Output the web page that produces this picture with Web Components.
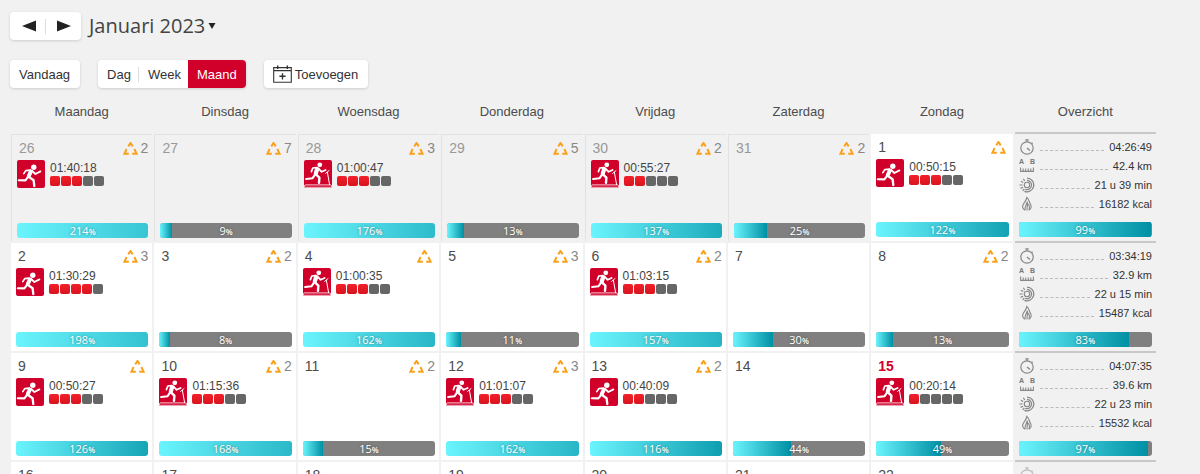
<!DOCTYPE html>
<html lang="nl">
<head>
<meta charset="utf-8">
<title>Kalender</title>
<style>
    body {
        margin: 0;
        height: 100vh;
        overflow: hidden;
        background: #f1f1f1;
        color: #4c4c4c;
        font-family: "Liberation Sans", Arial, sans-serif;
        font-size: 13px;
    }
</style>
</head>
<body>
<training-calendar></training-calendar>

<script>
/**
 * Creates a template element out of a string of markup.
 *
 * @param {String} html the markup
 * @returns {HTMLTemplateElement}
 */
function createTemplate(html) {
    const template = document.createElement("template");
    template.innerHTML = html;
    return template;
}

const ICONS = {
    run: `
        <svg viewBox="0 0 28 28" width="28" height="28">
            <rect width="28" height="28" rx="2" fill="#d0002b"/>
            <circle cx="16.8" cy="7.3" r="2.7" fill="#fff"/>
            <g fill="none" stroke="#fff" stroke-linecap="round" stroke-linejoin="round">
                <path d="M13.8 11.6L11.8 16" stroke-width="4"/>
                <path d="M13.5 10.2L8.8 10.6L6.8 13.6" stroke-width="1.7"/>
                <path d="M15.2 11L18.4 14L23.4 11.4" stroke-width="1.8"/>
                <path d="M11 17L8.4 20.4L1.8 20.2" stroke-width="2.1"/>
                <path d="M12.4 17.2L16.6 20.2L17.3 26" stroke-width="2.3"/>
            </g>
        </svg>`,
    treadmill: `
        <svg viewBox="0 0 28 28" width="28" height="28">
            <rect width="28" height="28" rx="2" fill="#d0002b"/>
            <circle cx="15.8" cy="4.8" r="2.4" fill="#fff"/>
            <g fill="none" stroke="#fff" stroke-linecap="round" stroke-linejoin="round">
                <path d="M13.2 9L11.8 13.4" stroke-width="4.2"/>
                <path d="M12.6 7.6L8.8 8L7.4 11.6" stroke-width="1.7"/>
                <path d="M14.6 8.6L17.6 11.8L21.6 10" stroke-width="1.8"/>
                <path d="M11 14.6L8.6 18.2L2.2 19" stroke-width="2.1"/>
                <path d="M12.2 14.6L15.4 17.6L15 22.8" stroke-width="2.4"/>
                <path d="M21.6 13.4L25 10.6M23.4 12.4L25.6 24.6" stroke-width="1"/>
            </g>
            <rect x=".5" y="24.9" width="27" height="2.4" rx="1" fill="#d0002b" stroke="#fff" stroke-width=".8"/>
        </svg>`,
    time: `
        <svg viewBox="0 0 16 16" width="16" height="16" fill="none" stroke="#888">
            <circle cx="8" cy="9" r="6.2" stroke-width="1.2"/>
            <path d="M8 2.8V1M6.3 .9H9.7M12.6 3.6L13.6 4.6M8 9L11 11.6" stroke-width="1.3"/>
        </svg>`,
    distance: `
        <svg viewBox="0 0 16 16" width="16" height="16" fill="none" stroke="#888">
            <g fill="#777" stroke="none" font-size="7" font-weight="bold">
                <text x="0" y="6">A</text>
                <text x="11" y="6">B</text>
            </g>
            <path d="M1.6 9.5V13.4H14.4V9.5M4.2 10.6V13M6.7 10.6V13M9.3 10.6V13M11.8 10.6V13" stroke-width="1.1"/>
        </svg>`,
    duration: `
        <svg viewBox="0 0 16 16" width="16" height="16" fill="none" stroke="#888">
            <path d="M8 1.2A6.8 6.8 0 1 1 5.4 14.3" stroke-width="1.3"/>
            <path d="M8 3.3A4.7 4.7 0 1 1 6.2 12.4" stroke-width="1.2"/>
            <circle cx="8" cy="8" r="2.7" stroke-width="1.1"/>
            <path d="M4.4 1.8L5.7 4M1.9 4.2L4.2 5.5M.4 8H3.6M1.6 11.4L4 10.2M3.8 14L5.2 11.9" stroke-width="1.2"/>
        </svg>`,
    energy: `
        <svg viewBox="0 0 16 16" width="16" height="16" fill="none" stroke="#888" stroke-width="1.1">
            <path d="M6.2 14.2C3.4 13 3 10.4 4.4 8C5.6 6 7.6 4.6 7.8 1.4C10 3.2 10 5.4 11 7.4C12.4 9.8 13.2 12.6 9.8 14.2"/>
            <path d="M6.2 14C5 11.4 7.6 9 8.2 5.6C9 8.6 8 10.4 8 14.4M9.8 14C11.2 12 10.2 9.6 9.4 8"/>
        </svg>`,
    add: `
        <svg viewBox="0 0 19 18" width="19" height="18" fill="none" stroke="#333">
            <path d="M.7 2.6H18.3V17.3H.7ZM.7 5.6H18.3" stroke-width="1.1"/>
            <path d="M4.7 .4V4M14.3 .4V4M9.5 8.2V14.4M6.4 11.3H12.6" stroke-width="1.4"/>
        </svg>`,
    load: `
        <svg viewBox="0 0 15 13" width="15" height="13" fill="none" stroke="#f9a11b" stroke-width="2">
            <path d="M5.3 4.4L7.5 1L9.7 4.4M3.6 7L1.4 11.8H5.8M11.4 7L13.6 11.8H9.2"/>
        </svg>`
};

const WEEKDAYS = ["Maandag", "Dinsdag", "Woensdag", "Donderdag", "Vrijdag", "Zaterdag", "Zondag", "Overzicht"];

// load: "" draws the triangle without a number
const WEEKS = [
    {
        days: [
            {day: 26, past: true, load: "2", sport: "run", time: "01:40:18", level: 3, percent: 214},
            {day: 27, past: true, load: "7", percent: 9},
            {day: 28, past: true, load: "3", sport: "treadmill", time: "01:00:47", level: 3, percent: 176},
            {day: 29, past: true, load: "5", percent: 13},
            {day: 30, past: true, load: "2", sport: "treadmill", time: "00:55:27", level: 2, percent: 137},
            {day: 31, past: true, load: "2", percent: 25},
            {day: 1, load: "", sport: "run", time: "00:50:15", level: 3, percent: 122}
        ],
        total: {time: "04:26:49", distance: "42.4 km", duration: "21 u 39 min", energy: "16182 kcal", percent: 99}
    },
    {
        days: [
            {day: 2, load: "3", sport: "run", time: "01:30:29", level: 4, percent: 198},
            {day: 3, load: "2", percent: 8},
            {day: 4, load: "", sport: "treadmill", time: "01:00:35", level: 3, percent: 162},
            {day: 5, load: "3", percent: 11},
            {day: 6, load: "2", sport: "treadmill", time: "01:03:15", level: 3, percent: 157},
            {day: 7, percent: 30},
            {day: 8, load: "2", percent: 13}
        ],
        total: {time: "03:34:19", distance: "32.9 km", duration: "22 u 15 min", energy: "15487 kcal", percent: 83}
    },
    {
        days: [
            {day: 9, load: "", sport: "run", time: "00:50:27", level: 3, percent: 126},
            {day: 10, load: "2", sport: "treadmill", time: "01:15:36", level: 3, percent: 168},
            {day: 11, load: "2", percent: 15},
            {day: 12, load: "3", sport: "treadmill", time: "01:01:07", level: 3, percent: 162},
            {day: 13, load: "2", sport: "run", time: "00:40:09", level: 2, percent: 116},
            {day: 14, percent: 44},
            {day: 15, today: true, sport: "treadmill", time: "00:20:14", level: 1, percent: 49}
        ],
        total: {time: "04:07:35", distance: "39.6 km", duration: "22 u 23 min", energy: "15532 kcal", percent: 97}
    },
    {
        days: [{day: 16}, {day: 17}, {day: 18}, {day: 19}, {day: 20}, {day: 21}, {day: 22}],
        total: {}
    }
];

/**
 * White raised box that holds one or more buttons.
 */
class ButtonGroup extends HTMLElement {
    constructor() {
        super();
        this.attachShadow({mode: "open"});
        this.shadowRoot.appendChild(ButtonGroup.template.content.cloneNode(true));
    }
}

ButtonGroup.template = createTemplate(`
    <style>
        :host {
            display: inline-flex;
            align-items: stretch;
            height: 28px;
            border-radius: 4px;
            background: #fff;
            box-shadow: 0 1px 3px rgba(0, 0, 0, 0.15);
            overflow: hidden;
        }

        ::slotted(button) {
            display: flex;
            align-items: center;
            gap: 3px;
            margin: 0;
            padding: 0 7px 0 9px;
            border: 0;
            background: none;
            color: #333;
            font: inherit;
            cursor: pointer;
        }

        ::slotted(button:last-child) {
            padding-right: 9px;
        }

        ::slotted(button:only-child) {
            padding-right: 10px;
        }

        ::slotted(button.active) {
            background: #d0002b;
            color: #fff;
        }

        ::slotted(hr) {
            width: 1px;
            height: 15px;
            margin: auto 0;
            border: 0;
            background: #ddd;
        }
    </style>
    <slot></slot>
`);

customElements.define("button-group", ButtonGroup);

/**
 * Progress bar. Above 100 percent the fill runs on outside the bar and is cut.
 */
class LoadBar extends HTMLElement {
    static get observedAttributes() {
        return ["percent"];
    }

    constructor() {
        super();
        this.attachShadow({mode: "open"});
        this.shadowRoot.appendChild(LoadBar.template.content.cloneNode(true));
    }

    attributeChangedCallback(name, oldValue, newValue) {
        this.shadowRoot.querySelector(".fill").style.width = `${newValue}%`;
        this.shadowRoot.querySelector(".value").textContent = newValue;
    }
}

LoadBar.template = createTemplate(`
    <style>
        :host {
            display: grid;
            height: 15px;
            border-radius: 3px;
            background: #808080;
            overflow: hidden;
        }

        .fill, .label {
            grid-area: 1 / 1;
        }

        .fill {
            background: linear-gradient(to right, #6af4fd, #0090a4);
        }

        .label {
            color: #fff;
            font: 11px/15px "Open Sans", sans-serif;
            text-align: center;
            text-shadow: 0 0 3px rgba(0, 0, 0, 0.4);
        }

        small {
            font-size: 8px;
            font-weight: 600;
        }
    </style>
    <div class="fill"></div>
    <div class="label"><span class="value"></span><small>%</small></div>
`);

customElements.define("load-bar", LoadBar);

/**
 * A sport icon with its duration and five intensity blocks.
 */
class SportActivity extends HTMLElement {
    constructor() {
        super();
        this.attachShadow({mode: "open"});
    }

    connectedCallback() {
        const level = Number(this.getAttribute("level"));
        let blocks = "";

        for(let i = 0; i < 5; i++) {
            blocks += `<i class="${i < level ? "on" : ""}"></i>`;
        }

        this.shadowRoot.innerHTML = `
            <style>
                :host {
                    display: flex;
                    gap: 5px;
                }

                svg {
                    display: block;
                }

                .time {
                    font-size: 12px;
                    line-height: 16px;
                    color: #444;
                }

                .blocks {
                    display: flex;
                    gap: 1px;
                }

                i {
                    width: 10px;
                    height: 10px;
                    border-radius: 2px;
                    background: #666;
                }

                i.on {
                    background: linear-gradient(#f3202a, #d8141f);
                }
            </style>
            ${ICONS[this.getAttribute("sport")]}
            <div>
                <div class="time"><slot></slot></div>
                <div class="blocks">${blocks}</div>
            </div>
        `;
    }
}

customElements.define("sport-activity", SportActivity);

/**
 * One day of the month.
 */
class CalendarDay extends HTMLElement {
    constructor() {
        super();
        this.attachShadow({mode: "open"});
    }

    connectedCallback() {
        const hasLoad = this.hasAttribute("load");

        this.shadowRoot.innerHTML = `
            <style>
                :host {
                    display: flex;
                    flex-direction: column;
                    box-sizing: border-box;
                    padding: 3px 4px 4px 5px;
                    border: 0 solid #f1f1f1;
                    border-width: 2px 2px 0 0;
                    background: #fff;
                }

                :host([past]) {
                    padding: 4px 4px 3px 6px;
                    background: #f1f1f1;
                    box-shadow: inset 1px 1px #e2e2e2;
                }

                header {
                    display: flex;
                    align-items: center;
                    height: 20px;
                    margin-bottom: 2px;
                    padding-left: 2px;
                    font-size: 14px;
                }

                .day {
                    flex: 1;
                }

                :host([past]) .day {
                    color: #999;
                }

                :host([today]) .day {
                    color: #d0002b;
                    font-weight: bold;
                }

                .load {
                    margin-left: 3px;
                    color: #888;
                }

                .content {
                    flex: 1;
                }
            </style>
            <header>
                <span class="day">${this.getAttribute("day")}</span>
                ${hasLoad ? `${ICONS.load}<span class="load">${this.getAttribute("load")}</span>` : ""}
            </header>
            <div class="content"><slot></slot></div>
            <slot name="bar"></slot>
        `;
    }
}

customElements.define("calendar-day", CalendarDay);

/**
 * The totals of a week, in the last column.
 */
class WeekTotal extends HTMLElement {
    constructor() {
        super();
        this.attachShadow({mode: "open"});
    }

    connectedCallback() {
        const rows = ["time", "distance", "duration", "energy"].map((key) => {
            const value = this.getAttribute(key) || "";
            return `<li>${ICONS[key]}<span class="dots"></span><span>${value}</span></li>`;
        });

        this.shadowRoot.innerHTML = `
            <style>
                :host {
                    display: flex;
                    flex-direction: column;
                    box-sizing: border-box;
                    margin-right: 2px;
                    padding: 3px 4px 4px 4px;
                    border-top: 2px solid #c8c8c8;
                }

                :host([empty]) li {
                    opacity: 0.5;
                }

                :host([empty]) .dots {
                    visibility: hidden;
                }

                ul {
                    flex: 1;
                    margin: 0;
                    padding: 0;
                    list-style: none;
                }

                li {
                    display: flex;
                    align-items: center;
                    gap: 5px;
                    height: 19px;
                    color: #333;
                    font-size: 11px;
                }

                .dots {
                    flex: 1;
                    height: 8px;
                    border-bottom: 1px dashed #bbb;
                }
            </style>
            <ul>${rows.join("")}</ul>
            <slot></slot>
        `;
    }
}

customElements.define("week-total", WeekTotal);

/**
 * The page: toolbars and the month grid.
 */
class TrainingCalendar extends HTMLElement {
    constructor() {
        super();
        this.attachShadow({mode: "open"});
        this.shadowRoot.appendChild(TrainingCalendar.template.content.cloneNode(true));
    }

    connectedCallback() {
        const month = this.shadowRoot.querySelector(".month");

        WEEKDAYS.forEach((name) => {
            const heading = document.createElement("div");
            heading.textContent = name;
            this.shadowRoot.querySelector(".weekdays").appendChild(heading);
        });

        WEEKS.forEach((week) => {
            week.days.forEach((data) => month.appendChild(this.createDay(data)));
            month.appendChild(this.createTotal(week.total));
        });
    }

    createBar(percent) {
        const bar = document.createElement("load-bar");
        bar.setAttribute("percent", percent);
        return bar;
    }

    createDay(data) {
        const day = document.createElement("calendar-day");

        day.setAttribute("day", data.day);
        day.toggleAttribute("past", !!data.past);
        day.toggleAttribute("today", !!data.today);

        if(data.load !== undefined) {
            day.setAttribute("load", data.load);
        }

        if(data.sport) {
            const activity = document.createElement("sport-activity");
            activity.setAttribute("sport", data.sport);
            activity.setAttribute("level", data.level);
            activity.textContent = data.time;
            day.appendChild(activity);
        }

        if(data.percent) {
            const bar = this.createBar(data.percent);
            bar.slot = "bar";
            day.appendChild(bar);
        }

        return day;
    }

    createTotal(data) {
        const total = document.createElement("week-total");

        ["time", "distance", "duration", "energy"].forEach((key) => {
            if(data[key]) {
                total.setAttribute(key, data[key]);
            }
        });

        if(data.percent) {
            total.appendChild(this.createBar(data.percent));
        } else {
            total.setAttribute("empty", "");
        }

        return total;
    }
}

TrainingCalendar.template = createTemplate(`
    <style>
        :host {
            display: block;
            padding: 12px 42px 0 10px;
        }

        .toolbar {
            display: flex;
            align-items: center;
            gap: 18px;
            margin-bottom: 20px;
        }

        .toolbar.title {
            gap: 8px;
        }

        .toolbar.views {
            margin-bottom: 0;
        }

        .arrow {
            width: 35px;
            justify-content: center;
        }

        .picker {
            display: flex;
            align-items: center;
            gap: 3px;
            height: 28px;
            padding: 0;
            border: 0;
            background: none;
            color: #444;
            font: 20px/28px "Open Sans", sans-serif;
        }

        .weekdays, .month {
            display: grid;
            grid-template-columns: repeat(8, 1fr);
            margin-left: 1px;
        }

        .weekdays {
            height: 44px;
            line-height: 48px;
            text-align: center;
        }

        .weekdays div {
            padding-right: 2px;
        }

        .month {
            grid-auto-rows: 109px 110px;
        }
    </style>
    <div class="toolbar title">
        <button-group>
            <button class="arrow" aria-label="Vorige">
                <svg width="14" height="12" viewBox="0 0 14 12"><path d="M0 6L14 .5V11.5Z" fill="#222"/></svg>
            </button>
            <hr>
            <button class="arrow" aria-label="Volgende">
                <svg width="14" height="12" viewBox="0 0 14 12"><path d="M14 6L0 .5V11.5Z" fill="#222"/></svg>
            </button>
        </button-group>
        <button class="picker">
            <span>Januari 2023</span>
            <svg width="8" height="6" viewBox="0 0 8 6"><path d="M.5 0H7.5L4 6Z" fill="#222"/></svg>
        </button>
    </div>
    <div class="toolbar views">
        <button-group><button>Vandaag</button></button-group>
        <button-group>
            <button>Dag</button>
            <hr>
            <button>Week</button>
            <button class="active">Maand</button>
        </button-group>
        <button-group><button>${ICONS.add}<span>Toevoegen</span></button></button-group>
    </div>
    <div class="weekdays"></div>
    <div class="month"></div>
`);

customElements.define("training-calendar", TrainingCalendar);
</script>
</body>
</html>
